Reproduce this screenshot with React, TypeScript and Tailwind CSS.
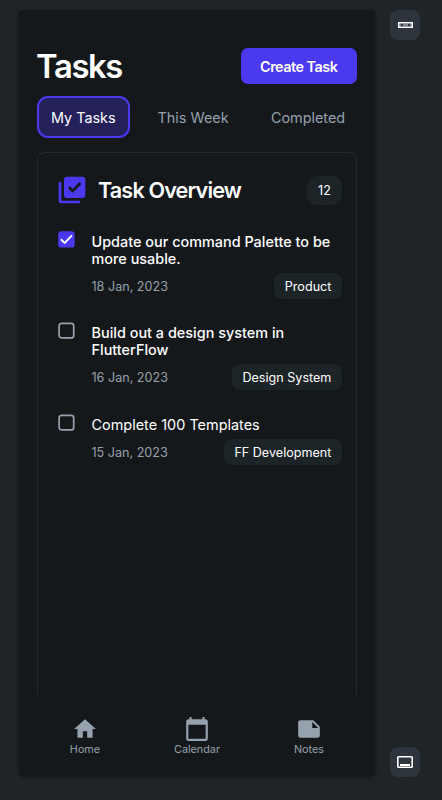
import { MdCalendarToday, MdHome, MdLibraryAddCheck, MdNote } from 'react-icons/md';

type Task = { title: string; date: string; tag: string; done: boolean; bold: boolean; layout: string };

const tasks: Task[] = [
  { title: 'Update our command Palette to be\nmore usable.', date: '18 Jan, 2023', tag: 'Product', done: true, bold: true, layout: 'h-[91px]' },
  { title: 'Build out a design system in\nFlutterFlow', date: '16 Jan, 2023', tag: 'Design System', done: false, bold: true, layout: 'h-[92px]' },
  { title: 'Complete 100 Templates', date: '15 Jan, 2023', tag: 'FF Development', done: false, bold: false, layout: 'h-[60px]' },
];

function Checkbox({ checked }: { checked: boolean }) {
  return (
    <svg className="mt-[-2px] size-[17px] shrink-0" viewBox="0 0 17 17" fill="none">
      {checked ? (
        <>
          <rect x="0.2" y="0.2" width="16.4" height="16.4" rx="3.2" fill="#4b39ef" />
          <path d="M2.8 8.2 6.7 12 14 4.4" stroke="#fff" strokeWidth="1.9" />
        </>
      ) : (
        <rect x="1.1" y="1.3" width="14.6" height="14.6" rx="2.5" stroke="#95a1ac" strokeWidth="1.7" />
      )}
    </svg>
  );
}

function TaskRow({ task }: { task: Task }) {
  return (
    <div className={`flex ${task.layout}`}>
      <Checkbox checked={task.done} />
      <div className="ml-[16.5px] flex-1">
        <p className={`text-[14.4px] leading-[17px] whitespace-pre text-white ${task.bold ? 'font-medium tracking-[0.02px]' : 'font-normal tracking-[0.03px]'}`}>
          {task.title}
        </p>
        <div className={`flex h-[26px] items-center justify-between ${task.bold ? 'mt-[6px]' : 'mt-[6px]'}`}>
          <span className="pt-[2px] text-[12.6px] text-[#95a1ac]">{task.date}</span>
          <span className="flex h-[25.5px] items-center rounded-lg bg-[#1d2428] px-[10.6px] pt-[2px] text-[12.6px] whitespace-nowrap text-white">{task.tag}</span>
        </div>
      </div>
    </div>
  );
}

const navItems = [
  { label: 'Home', Icon: MdHome },
  { label: 'Calendar', Icon: MdCalendarToday },
  { label: 'Notes', Icon: MdNote },
];

export default function App() {
  return (
    <div className="flex h-[800px] w-[442px] overflow-hidden bg-[#1f2427] pt-[10px] pl-[19px] font-['Inter',sans-serif]">
      <main className="flex h-[766px] w-[356px] shrink-0 flex-col rounded-[5px] bg-[#14181b] px-[18px] shadow-[0_1px_4px_rgba(0,0,0,0.45)]">
        <header className="mt-[38px] flex h-9 items-center justify-between">
          <h1 className="-ml-px pt-[2px] text-[32.8px] font-semibold tracking-[-1.35px] text-white">Tasks</h1>
          <button className="h-9 w-[116.5px] rounded-[7px] bg-[#4b39ef] pt-px text-[14.4px] font-semibold tracking-[-0.5px] whitespace-nowrap text-white">Create Task</button>
        </header>
        <nav className="mt-3 flex h-[42px] items-center text-[14.4px] whitespace-nowrap text-[#95a1ac]">
          <button className="h-[41.5px] w-[92.5px] rounded-[11px] border-2 border-[#4b39ef] bg-[#24205a] pt-px text-white">My Tasks</button>
          <button className="ml-[28px] w-[71px] pt-px">This Week</button>
          <button className="ml-[41.5px] w-[76px] pt-px">Completed</button>
        </nav>
        <section className="mt-[14px] h-[543px] rounded-t-lg border border-b-0 border-[#24292d] pr-[14px] pl-5">
          <div className="mt-[22px] flex h-[30px] items-center">
            <MdLibraryAddCheck className="-ml-[2px] size-[32px] shrink-0 text-[#4b39ef]" />
            <h2 className="ml-[10px] flex-1 text-[21.6px] font-semibold tracking-[-0.85px] whitespace-nowrap text-white">Task Overview</h2>
            <span className="flex h-[29px] w-[35px] items-center justify-center rounded-[10px] bg-[#1d2428] pt-[3px] text-[12.6px] text-white">12</span>
          </div>
          <div className="mt-[28px]">
            {tasks.map((task) => <TaskRow key={task.date} task={task} />)}
          </div>
        </section>
        <footer className="-mx-2 mt-[21px] flex justify-center text-[#95a1ac]">
          {navItems.map(({ label, Icon }) => (
            <div key={label} className="flex w-28 shrink-0 flex-col items-center">
              <Icon className="size-[26px]" />
              <span className="mt-px text-[10.8px] leading-[13px]">{label}</span>
            </div>
          ))}
        </footer>
      </main>
      <aside className="ml-[15px] flex h-[767px] flex-col justify-between">
        <button className="flex size-[30px] items-center justify-center rounded-lg bg-[#2d343c]">
          <svg className="-mt-px h-[6px] w-[15px]" viewBox="0 0 15 6" fill="none">
            <rect x="0.75" y="0.75" width="13.5" height="4.5" stroke="#fff" strokeWidth="1.5" />
            <path d="M2 3h1M5 3h5M12 3h1" stroke="#cfd3d6" strokeWidth="1" />
          </svg>
        </button>
        <button className="flex size-[30px] items-center justify-center rounded-lg bg-[#2d343c]">
          <svg className="h-3 w-4" viewBox="0 0 16 12" fill="none">
            <rect x="0.8" y="0.8" width="14.4" height="10.4" rx="0.8" stroke="#fff" strokeWidth="1.6" />
            <path d="M3 9h10" stroke="#fff" strokeWidth="2" />
          </svg>
        </button>
      </aside>
    </div>
  );
}
